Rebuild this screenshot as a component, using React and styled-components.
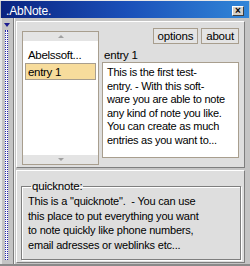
import React from "react";
import styled, { createGlobalStyle } from "styled-components";

const GlobalStyle = createGlobalStyle`
  html, body { margin: 0; padding: 0; background: #c4c4c4; }
  body { width: 250px; height: 266px; overflow: hidden; font-family: "Liberation Sans", Arial, sans-serif; }
  #root { width: 250px; height: 266px; }
`;

const Window = styled.div`
  width: 250px;
  height: 266px;
  box-sizing: border-box;
  display: flex;
  flex-direction: column;
  background: #c4c4c4;
  border-top: 1px solid #e8e8e8;
  border-bottom: 2px solid #8a8a8a;
`;

const TitleBar = styled.div`
  height: 17px;
  margin: 0 1px;
  padding: 0 5px 0 5px;
  display: flex;
  align-items: center;
  justify-content: space-between;
  background: linear-gradient(to right, #0a2380 0%, #1a4fb8 50%, #3186d8 100%);
`;

const Title = styled.span`
  color: #fff;
  font-size: 12px;
  letter-spacing: -0.2px;
  padding-top: 2px;
`;

const CloseButton = styled.div`
  width: 12px;
  height: 10px;
  box-sizing: border-box;
  margin-top: 2px;
  background: #d4d0c8;
  border: 1px solid;
  border-color: #fff #404040 #404040 #fff;
  display: flex;
  align-items: center;
  justify-content: center;
  font-size: 10px;
  font-weight: bold;
  line-height: 1;
  color: #000;
`;

const Body = styled.div`
  flex: 1;
  display: flex;
  min-height: 0;
`;

const Strip = styled.div`
  width: 14px;
  box-sizing: border-box;
  display: flex;
  flex-direction: column;
  align-items: center;
  padding: 5px 0 4px;
  gap: 3px;
  border-left: 2px solid #e4e4e4;
  border-right: 1px solid #7c7c7c;
`;

const DownMark = styled.div`
  width: 0;
  height: 0;
  border-left: 3px solid transparent;
  border-right: 3px solid transparent;
  border-top: 4px solid #1c1c90;
  margin-right: 2px;
`;

const DotLine = styled.div`
  flex: 1;
  width: 1px;
  margin-right: 2px;
  background: #f4f4fc;
  border-left: 1px dotted #2a2aa8;
  border-right: 1px dotted #2a2aa8;
`;

const Main = styled.div`
  flex: 1;
  display: flex;
  flex-direction: column;
  gap: 2px;
  padding: 3px 5px 1px 1px;
  border-left: 1px solid #f4f4f4;
  min-width: 0;
`;

const Panel = styled.div`
  background: #dedede;
  border: 1px solid;
  border-color: #ffffff #7e7e7e #7e7e7e #ffffff;
  box-sizing: border-box;
`;

const UpperPanel = styled(Panel)`
  height: 147px;
  display: flex;
  gap: 3px;
  padding: 6px 5px 2px 5px;
`;

const LowerPanel = styled(Panel)`
  flex: 1;
  padding: 9px 3px 2px 4px;
  display: flex;
`;

const ListBox = styled.div`
  width: 77px;
  margin-top: 3px;
  box-sizing: border-box;
  border: 1px solid #a89e8e;
  background: #fff;
  display: flex;
  flex-direction: column;
`;

const ScrollEnd = styled.div`
  height: 9px;
  background: #e4e4e4;
  display: flex;
  align-items: center;
  justify-content: center;
`;

const Arrow = styled.div`
  width: 0;
  height: 0;
  border-left: 3px solid transparent;
  border-right: 3px solid transparent;
  ${(p) => (p.$up ? "border-bottom: 3px solid #a0a0a0;" : "border-top: 3px solid #a0a0a0;")}
`;

const Items = styled.div`
  flex: 1;
  padding: 5px 2px 0 2px;
  display: flex;
  flex-direction: column;
`;

const Item = styled.div`
  height: 17px;
  box-sizing: border-box;
  padding: 1px 2px 0;
  font-size: 11.5px;
  letter-spacing: -0.3px;
  line-height: 15px;
  color: #000;
  white-space: nowrap;
  background: ${(p) => (p.$selected ? "#f7dc9c" : "transparent")};
  border: 1px solid ${(p) => (p.$selected ? "#a89e8e" : "transparent")};
`;

const RightCol = styled.div`
  flex: 1;
  display: flex;
  flex-direction: column;
  min-width: 0;
`;

const ButtonRow = styled.div`
  display: flex;
  justify-content: flex-end;
  gap: 3px;
`;

const Button = styled.div`
  height: 16px;
  box-sizing: border-box;
  padding: 0 4px;
  border: 1px solid #a89e8e;
  background: #e4e4e4;
  font-size: 11.5px;
  letter-spacing: -0.2px;
  line-height: 14px;
  color: #000;
`;

const EntryLabel = styled.div`
  margin-top: 4px;
  padding-left: 2px;
  height: 14px;
  font-size: 11.5px;
  letter-spacing: -0.2px;
  line-height: 14px;
  color: #000;
`;

const TextArea = styled.div`
  height: 96px;
  box-sizing: border-box;
  border: 1px solid #a89e8e;
  background: #fff;
  padding: 3px 2px 0 4px;
  font-size: 11px;
  letter-spacing: -0.25px;
  line-height: 13.6px;
  color: #000;
  white-space: nowrap;
  overflow: hidden;
`;

const GroupBox = styled.fieldset`
  flex: 1;
  margin: 0;
  padding: 0 4px 0 6px;
  border: 1px solid #7e7e7e;
  box-shadow: 1px 1px 0 #fff, inset 1px 1px 0 #fff;
  min-width: 0;
`;

const Legend = styled.legend`
  padding: 0 1px;
  margin-left: 3px;
  font-size: 11.5px;
  letter-spacing: -0.2px;
  line-height: 12px;
  color: #000;
`;

const QuickText = styled.div`
  padding-top: 2px;
  font-size: 11px;
  letter-spacing: -0.2px;
  line-height: 14.5px;
  color: #000;
  white-space: pre;
`;

const entryLines = [
  "This is the first test-",
  "entry. - With this soft-",
  "ware you are able to note",
  "any kind of note you like.",
  "You can create as much",
  "entries as you want to...",
];

const quickLines = [
  "This is a \"quicknote\".  - You can use",
  "this place to put everything you want",
  "to note quickly like phone numbers,",
  "email adresses or weblinks etc...",
];

export default function App() {
  return (
    <>
      <GlobalStyle />
      <Window>
        <TitleBar>
          <Title>.AbNote.</Title>
          <CloseButton>×</CloseButton>
        </TitleBar>
        <Body>
          <Strip>
            <DownMark />
            <DotLine />
          </Strip>
          <Main>
            <UpperPanel>
              <ListBox>
                <ScrollEnd>
                  <Arrow $up />
                </ScrollEnd>
                <Items>
                  <Item>Abelssoft...</Item>
                  <Item $selected>entry 1</Item>
                </Items>
                <ScrollEnd>
                  <Arrow />
                </ScrollEnd>
              </ListBox>
              <RightCol>
                <ButtonRow>
                  <Button>options</Button>
                  <Button>about</Button>
                </ButtonRow>
                <EntryLabel>entry 1</EntryLabel>
                <TextArea>
                  {entryLines.map((l, i) => (
                    <div key={i}>{l}</div>
                  ))}
                </TextArea>
              </RightCol>
            </UpperPanel>
            <LowerPanel>
              <GroupBox>
                <Legend>quicknote:</Legend>
                <QuickText>
                  {quickLines.map((l, i) => (
                    <div key={i}>{l}</div>
                  ))}
                </QuickText>
              </GroupBox>
            </LowerPanel>
          </Main>
        </Body>
      </Window>
    </>
  );
}
